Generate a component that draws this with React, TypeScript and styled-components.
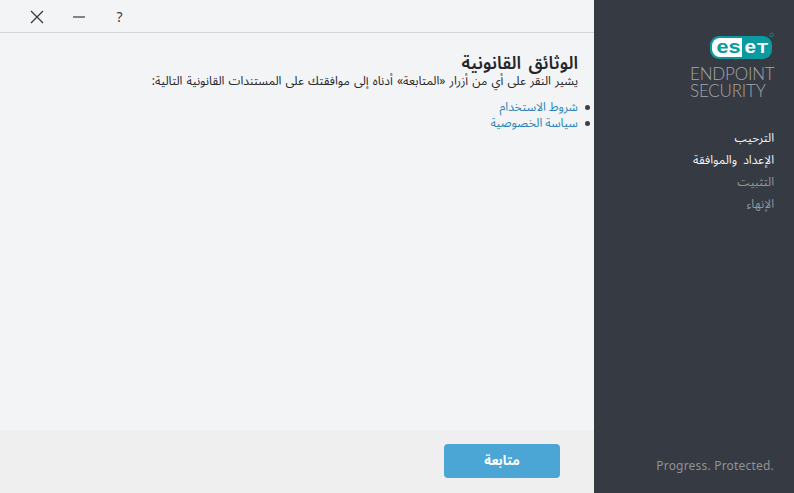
import React from "react";
import styled, { createGlobalStyle } from "styled-components";

const Global = createGlobalStyle`
  html, body { margin: 0; padding: 0; height: 100%; }
  body { font-family: "Noto Sans", "Noto Sans Arabic", "DejaVu Sans", sans-serif; overflow: hidden; }
  #root { height: 100%; }
`;

const Page = styled.div`
  width: 794px;
  height: 493px;
  display: flex;
  background: #f3f4f6;
`;

const Main = styled.main`
  width: 594px;
  display: flex;
  flex-direction: column;
`;

const TitleBar = styled.div`
  height: 33px;
  box-sizing: border-box;
  flex: none;
  display: flex;
  align-items: center;
  padding: 2px 0 0 29px;
  gap: 26px;
  border-bottom: 1px solid #d3d4d6;
`;

const WinButton = styled.span`
  width: 16px;
  height: 16px;
  display: flex;
  align-items: center;
  justify-content: center;
`;

const HelpButton = styled.span`
  width: 13px;
  height: 16px;
  display: flex;
  align-items: center;
  justify-content: center;
  color: #36393f;
  font-size: 14px;
  line-height: 16px;
`;

const Content = styled.section`
  flex: 1;
  direction: rtl;
  padding: 18px 16px 0 0;
  color: #23262c;
`;

const Title = styled.h1`
  margin: 0;
  font-size: 17.5px;
  word-spacing: 3px;
  line-height: 22px;
  font-weight: 600;
`;

const Lead = styled.p`
  margin: 0;
  font-size: 12px;
  word-spacing: 1px;
  line-height: 16px;
  height: 26px;
`;

const LinkList = styled.ul`
  list-style: none;
  margin: 0;
  padding: 0;
  font-size: 12px;
  line-height: 16px;
`;

const LinkItem = styled.li`
  display: flex;
  align-items: center;
  gap: 7px;
  margin-right: -12px;
  &::before {
    content: "";
    flex: none;
    width: 5px;
    height: 5px;
    border-radius: 50%;
    background: #3d4148;
  }
`;

const DocLink = styled.a`
  color: #2a85b9;
`;

const Footer = styled.div`
  height: 63px;
  box-sizing: border-box;
  flex: none;
  background: #efefef;
  display: flex;
  align-items: flex-start;
  justify-content: flex-end;
  padding: 14px 34px 0 0;
`;

const Continue = styled.button`
  width: 116px;
  height: 34px;
  border: 0;
  border-radius: 4px;
  background: #4ba6d6;
  color: #fff;
  font: 700 13px "Noto Sans", "Noto Sans Arabic", "DejaVu Sans", sans-serif;
  direction: rtl;
  padding: 0;
`;

const Sidebar = styled.aside`
  width: 200px;
  background: #363a42;
  display: flex;
  flex-direction: column;
  align-items: flex-end;
  padding: 32px 20px 0 0;
  box-sizing: border-box;
`;

const Logo = styled.svg`
  display: block;
  width: 66px;
  height: 28px;
  margin-right: -1px;
`;

const Product = styled.div`
  margin-top: 5px;
  width: 84px;
  font-family: "Lato", sans-serif;
  font-weight: 300;
  font-size: 17px;
  line-height: 17px;
  letter-spacing: -0.2px;
  color: #a4a6ab;
`;

const Steps = styled.ol`
  list-style: none;
  margin: 28px 0 0;
  padding: 0;
  direction: rtl;
  width: 180px;
  display: flex;
  flex-direction: column;
`;

const Step = styled.li<{ $active: boolean }>`
  font-size: 12px;
  word-spacing: 3px;
  line-height: 22px;
  color: ${(p) => (p.$active ? "#f2f2f2" : "#93969b")};
`;

const Tagline = styled.div`
  margin-top: auto;
  margin-bottom: 19px;
  font-size: 12px;
  line-height: 16px;
  letter-spacing: 0.2px;
  color: #8f9298;
`;

export default function App() {
  return (
    <Page>
      <Global />
      <Main>
        <TitleBar>
          <WinButton>
            <svg width="14" height="14" viewBox="0 0 14 14" fill="none" stroke="#36393f" strokeWidth="1.3">
              <path d="M1 1 13 13M13 1 1 13" />
            </svg>
          </WinButton>
          <WinButton>
            <svg width="12" height="2" viewBox="0 0 12 2" stroke="#36393f" strokeWidth="1.2">
              <path d="M0 1H12" />
            </svg>
          </WinButton>
          <HelpButton>?</HelpButton>
        </TitleBar>
        <Content>
          <Title>الوثائق القانونية</Title>
          <Lead>يشير النقر على أي من أزرار «المتابعة» أدناه إلى موافقتك على المستندات القانونية التالية:</Lead>
          <LinkList>
            <LinkItem><DocLink>شروط الاستخدام</DocLink></LinkItem>
            <LinkItem><DocLink>سياسة الخصوصية</DocLink></LinkItem>
          </LinkList>
        </Content>
        <Footer>
          <Continue>متابعة</Continue>
        </Footer>
      </Main>
      <Sidebar>
        <Logo viewBox="0 0 66 28" aria-label="ESET">
          <rect x="1" y="4" width="62" height="23" rx="9" fill="#0a9a9f" />
          <path d="M11 6H33V25H11A8 8 0 0 1 3 17V14A8 8 0 0 1 11 6Z" fill="#fff" />
          <text x="7.5" y="20.5" fontFamily="Liberation Sans" fontWeight="700" fontSize="19" fill="#0a9a9f" textLength="24" lengthAdjust="spacingAndGlyphs">es</text>
          <text x="35.5" y="20.5" fontFamily="Liberation Sans" fontWeight="700" fontSize="19" fill="#fff" textLength="11.5" lengthAdjust="spacingAndGlyphs">e</text>
          <text x="48" y="20.5" fontFamily="Liberation Sans" fontWeight="700" fontSize="14" fill="#fff" textLength="11" lengthAdjust="spacingAndGlyphs">T</text>
          <circle cx="62.5" cy="3" r="1.8" fill="none" stroke="#0a9a9f" strokeWidth="0.7" />
        </Logo>
        <Product>ENDPOINT<br />SECURITY</Product>
        <Steps>
          <Step $active>الترحيب</Step>
          <Step $active>الإعداد والموافقة</Step>
          <Step $active={false}>التثبيت</Step>
          <Step $active={false}>الإنهاء</Step>
        </Steps>
        <Tagline>Progress. Protected.</Tagline>
      </Sidebar>
    </Page>
  );
}
